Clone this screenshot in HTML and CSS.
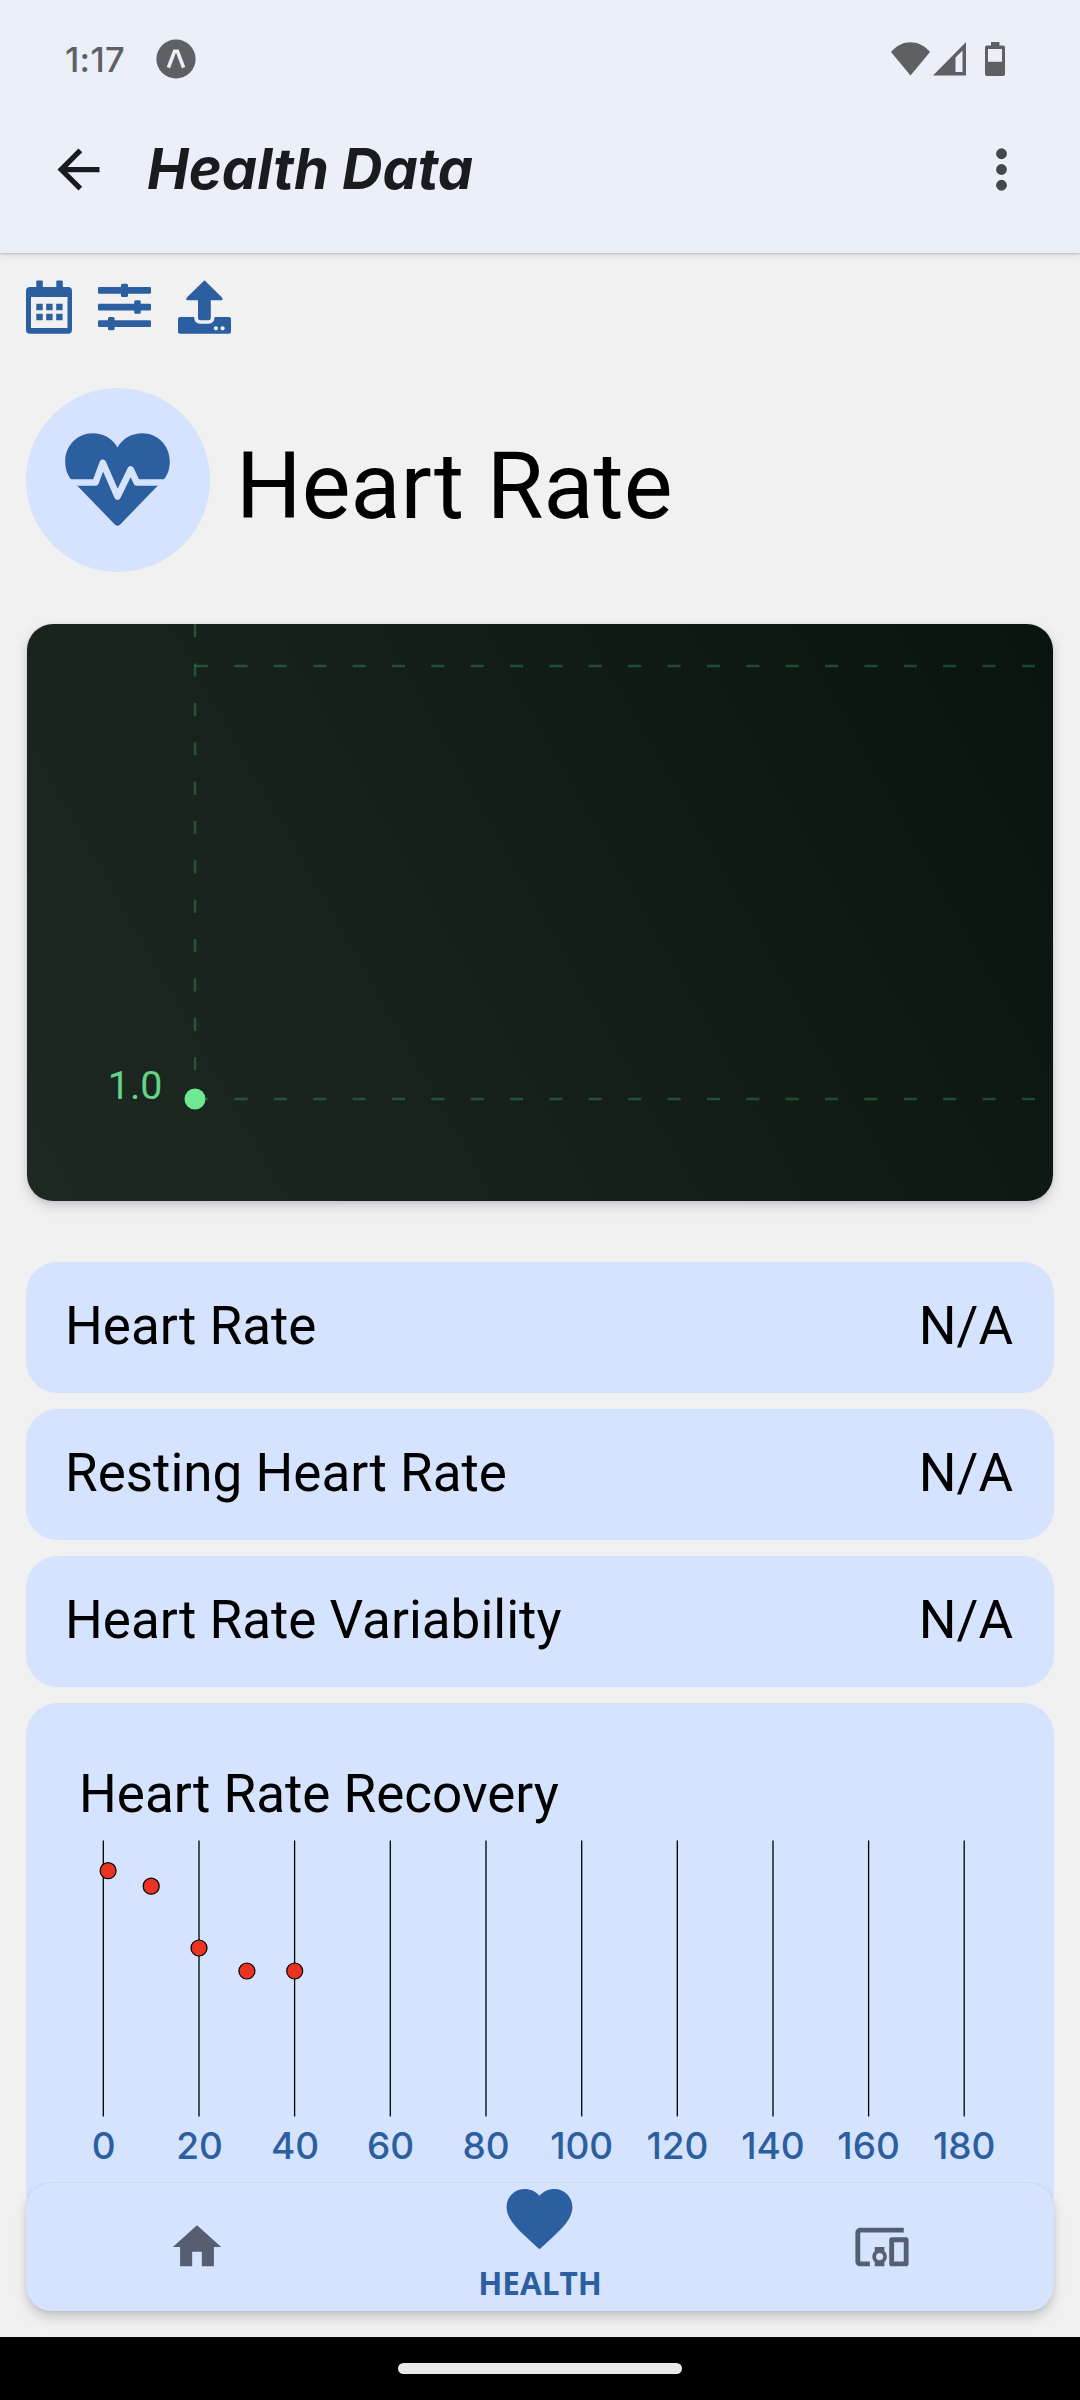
FILE: index.html
```html
<!DOCTYPE html>
<html lang="en">
<head>
<meta charset="utf-8">
<title>Health Data</title>
<link rel="stylesheet" href="styles.css">
</head>
<body>
<div class="screen">
  <header class="header">
    <div class="status">
      <span class="clock">1:17</span>
      <svg class="expo" viewBox="0 0 40 40"><circle cx="20" cy="20" r="19.6" fill="#5f6064"/><path d="M12.4 28.6 18.6 12.2h2.8l6.2 16.4" fill="none" stroke="#ebeff7" stroke-width="3.6"/></svg>
      <div class="signals">
        <svg width="39" height="34" viewBox="0 0 39 34"><path d="M0 10C11-3 28-3 39 10L19.5 33.5z"/></svg>
        <svg class="cell" width="33" height="34" viewBox="0 0 33 34"><path fill-rule="evenodd" d="M0 33.5 33 0v33.5zM22.5 30h7V8.500L22.500 15.500z"/></svg>
        <svg class="battery" width="20" height="34" viewBox="0 0 20 34"><path fill-rule="evenodd" d="M6 0h8.500v3.500H18q2 0 2 2V32q0 2-2 2H2q-2 0-2-2V5.500q0-2 2-2h4zM3 7v12.700h14V7z"/></svg>
      </div>
    </div>
    <div class="appbar">
      <svg class="back" viewBox="0 0 24 24"><path d="M20 11H7.830l5.590-5.590L12 4l-8 8 8 8 1.410-1.410L7.830 13H20v-2z"/></svg>
      <h1 class="title">Health Data</h1>
      <svg class="more" viewBox="0 0 24 24"><circle cx="12" cy="6" r="2.050"/><circle cx="12" cy="12" r="2.050"/><circle cx="12" cy="18" r="2.050"/></svg>
    </div>
  </header>

  <main class="content">
    <div class="tools">
      <svg width="46" height="54" viewBox="0 0 46 54"><path fill-rule="evenodd" d="M10.300 7V1.500q0-1 1-1h4.500q1 0 1 1V7h13.500V1.500q0-1 1-1h4.500q1 0 1 1V7H42q4 0 4 4v38.700q0 4-4 4H4q-4 0-4-4V11q0-4 4-4zM5 17v31h36.500V17z"/><path d="M10.300 23.700h6.400v6.600h-6.400zM20.200 23.700h6.400v6.600h-6.400zM30.200 23.700h6.400v6.600h-6.400zM10.300 33.700h6.400v6.600h-6.400zM20.200 33.700h6.400v6.600h-6.400zM30.200 33.700h6.400v6.600h-6.400z"/></svg>
      <svg width="53" height="54" viewBox="0 0 53 54"><g><rect y="7" width="53" height="6.700" rx="1.200"/><rect y="23.700" width="53" height="6.700" rx="1.200"/><rect y="40.300" width="53" height="6.700" rx="1.200"/><rect x="23" y="3.700" width="7" height="13.300" rx="1.500"/><rect x="36.200" y="20.300" width="6.600" height="13.400" rx="1.500"/><rect x="10" y="37" width="6.600" height="13.300" rx="1.500"/></g></svg>
      <svg width="53" height="54" viewBox="0 0 53 54"><path fill-rule="evenodd" d="M2 37h14.200q0 6.700 6 6.700h8.300q6 0 6-6.700H51q2 0 2 2v12.700q0 2-2 2H2q-2 0-2-2V39q0-2 2-2zm35.900 9.200a2.100 2.100 0 1 0 .01 0zm6.700 0a2.100 2.100 0 1 0 .01 0z"/><path d="M26.500.300 44 17.500q1.400 2.800-.5 2.800H32.800v17.500q0 2.500-2.500 2.500h-7.800q-2.500 0-2.500-2.500V20.300H9.300q-1.700 0-.5-2.800z"/></svg>
    </div>

    <section class="hero">
      <div class="badge">
        <svg width="105" height="94" viewBox="65 433 105 94"><path d="M117.500 447.500C112 438 103 433.300 92.700 433.300 77 433.300 65.200 446 65.200 461.500c0 7.500 2.200 13.500 6 18l43.600 44.900q2.700 2.600 5.400 0l43.600-44.900c3.800-4.500 6-10.500 6-18 0-15.500-11.800-28.200-27.500-28.200-10.300 0-19.300 4.700-24.800 14.200z" fill="#2b5fa0"/><path d="M60 482.500H95.500L102.800 462.800 117.500 496.500 130.700 469.500 136.800 482.500H176" fill="none" stroke="#d6e3fe" stroke-width="6.600" stroke-linejoin="round"/></svg>
      </div>
      <h2 class="hero-title">Heart Rate</h2>
    </section>

    <section class="trend">
      <svg width="1026" height="577" viewBox="0 0 1026 577">
        <g class="grid">
          <path d="M168 0V475"/>
          <path d="M168 42H1009"/>
          <path d="M168 475H1009"/>
        </g>
        <circle cx="168" cy="475" r="10.500" fill="#6ee992"/>
        <text class="trend-label" x="135.500" y="475" text-anchor="end">1.0</text>
      </svg>
    </section>

    <section class="cards">
      <div class="row"><span class="label">Heart Rate</span><span class="value">N/A</span></div>
      <div class="row"><span class="label">Resting Heart Rate</span><span class="value">N/A</span></div>
      <div class="row"><span class="label">Heart Rate Variability</span><span class="value">N/A</span></div>
      <div class="recovery">
        <h3 class="recovery-title">Heart Rate Recovery</h3>
        <svg class="recovery-chart" width="924" height="340" viewBox="79 1840 924 340">
          <path class="axis" d="M103.300 1840.500V2116.500M199 1840.500V2116.500M294.600 1840.500V2116.500M390.300 1840.500V2116.500M486 1840.500V2116.500M581.700 1840.500V2116.500M677.300 1840.500V2116.500M773 1840.500V2116.500M868.600 1840.500V2116.500M964.200 1840.500V2116.500"/>
          <g class="points"><circle cx="108.100" cy="1870.700" r="8"/><circle cx="151.200" cy="1886.200" r="8"/><circle cx="199" cy="1948" r="8"/><circle cx="246.900" cy="1971" r="8"/><circle cx="294.700" cy="1971" r="8"/></g>
          <g class="ticks"><text x="103.800" y="2159">0</text><text x="199.500" y="2159">20</text><text x="295" y="2159">40</text><text x="390.500" y="2159">60</text><text x="486" y="2159">80</text><text x="581.700" y="2159">100</text><text x="677.400" y="2159">120</text><text x="773" y="2159">140</text><text x="868.600" y="2159">160</text><text x="964.200" y="2159">180</text></g>
        </svg>
      </div>
    </section>
  </main>

  <nav class="tabs">
    <div class="tab"><svg width="58" height="58" viewBox="0 0 24 24"><path d="M10 20v-6h4v6h5v-8h3L12 3 2 12h3v8z"/></svg></div>
    <div class="tab active"><svg width="79" height="79" viewBox="0 0 24 24"><path d="M12 21.350l-1.450-1.320C5.400 15.360 2 12.280 2 8.500 2 5.420 4.420 3 7.500 3c1.740 0 3.410.81 4.500 2.090C13.090 3.810 14.760 3 16.500 3 19.580 3 22 5.420 22 8.500c0 3.780-3.400 6.860-8.550 11.540L12 21.350z"/></svg><span>HEALTH</span></div>
    <div class="tab"><svg width="58" height="58" viewBox="0 0 24 24"><path d="M3 6h18V4H3c-1.100 0-2 .9-2 2v12c0 1.100.9 2 2 2h4v-2H3V6zm10 6H9v1.780c-.61.55-1 1.330-1 2.220s.39 1.670 1 2.220V20h4v-1.780c.61-.55 1-1.340 1-2.220s-.39-1.670-1-2.220V12zm-2 5.500c-.83 0-1.500-.67-1.500-1.500s.67-1.500 1.500-1.500 1.500.67 1.500 1.500-.67 1.500-1.500 1.500zM22 8h-6c-.5 0-1 .5-1 1v10c0 .5.5 1 1 1h6c.5 0 1-.5 1-1V9c0-.5-.5-1-1-1zm-1 10h-4v-8h4v8z"/></svg></div>
  </nav>

  <footer class="gesture"><div class="pill"></div></footer>
</div>
</body>
</html>
```
FILE: styles.css
```css
* { box-sizing: border-box; }
body { margin: 0; background: #f1f1f1; font-family: Roboto, "Liberation Sans", sans-serif; color: #000; }
svg { display: block; flex: none; }
h1, h2, h3 { margin: 0; font-weight: 400; }
.screen { width: 1080px; height: 2400px; display: flex; flex-direction: column; overflow: hidden; }

.header { height: 253px; flex: none; background: #ebeff7; box-shadow: 0 1px 2px rgba(0,0,0,.18), 0 3px 7px rgba(0,0,0,.07); }
.status { height: 118px; display: flex; align-items: center; padding: 0 75px 0 65px; }
.clock { width: 91px; font: 500 34.5px Inter, sans-serif; letter-spacing: .3px; color: #5f6064; white-space: nowrap; }
.expo { width: 40px; height: 40px; }
.signals { margin-left: auto; display: flex; fill: #5f6064; }
.cell { margin-left: 3px; }
.battery { margin-left: 19px; }
.appbar { height: 103px; display: flex; align-items: center; padding: 0 47px; }
.back { width: 63px; height: 63px; fill: #1a1b1e; }
.title { margin: -2px 0 0 37px; font: italic 700 56px/70px Inter, sans-serif; color: #1a1b1e; white-space: nowrap; }
.more { width: 63px; height: 63px; margin-left: auto; fill: #44474f; }

.content { height: 1952px; flex: none; padding: 27px 26px 0; overflow: hidden; }
.tools { height: 54px; display: flex; fill: #2b5fa0; }
.tools svg + svg { margin-left: 26px; }
.tools svg + svg + svg { margin-left: 27px; }

.hero { margin-top: 54px; height: 184px; display: flex; align-items: center; }
.badge { width: 184px; height: 184px; border-radius: 50%; background: #d6e3fe; display: flex; align-items: center; justify-content: center; padding-right: 1px; }
.hero-title { margin: 13px 0 0 26px; font-size: 92px; line-height: 108px; white-space: nowrap; }

.trend { margin: 52px 1px 0; height: 577px; border-radius: 26px; overflow: hidden; background: linear-gradient(60.65deg, #1e2923, #08130d 104%); }
.trend { box-shadow: 0 5px 12px rgba(20,20,50,.16), 0 1px 4px rgba(0,0,0,.08); }
.grid { fill: none; stroke: #5ae98c; stroke-opacity: .24; stroke-width: 2.6; stroke-dasharray: 13.125 26.25; }
.trend-label { font-size: 39.4px; fill: #63d387; }

.cards { margin-top: 61px; display: flex; flex-direction: column; gap: 16px; }
.row { height: 131px; border-radius: 31.5px; background: #d6e3fe; padding: 33px 41px 0 39px; display: flex; justify-content: space-between; }
.label, .value, .recovery-title { font-size: 53px; line-height: 62px; white-space: nowrap; }
.recovery { height: 520px; border-radius: 31.5px; background: #d6e3fe; padding: 60px 52px 0 53px; }
.recovery-title { height: 77px; }
.axis { stroke: #000; stroke-width: 1.3; fill: none; }
.points { fill: #eb3323; stroke: #000; stroke-width: 1.2; }
.ticks { font: 450 37px Inter, sans-serif; fill: #2b5fa0; text-anchor: middle; }

.tabs { position: relative; flex: none; height: 129px; margin: -23px 26px 0; border-top: 1px solid #d3d9e4; border-radius: 26px; background: #d6e3fe; box-shadow: 0 7px 12px rgba(0,0,0,.16), 0 2px 4px rgba(0,0,0,.06); display: grid; grid-template-columns: repeat(3, 1fr); clip-path: inset(0 -26px -26px); }
.tab { display: flex; flex-direction: column; align-items: center; justify-content: center; fill: #565f71; }
.tab:last-child { padding-right: 1px; }
.active { justify-content: flex-start; fill: #2b5fa0; color: #2b5fa0; font: 700 31.5px/40px "Open Sans", "Noto Sans", sans-serif; }
.active svg { margin-top: -4px; }
.active span { margin-top: 5px; }

.gesture { flex: none; margin-top: 26px; height: 63px; background: #000; display: flex; justify-content: center; padding-top: 26px; }
.pill { width: 284px; height: 11px; border-radius: 6px; background: #eaeaea; }
```
